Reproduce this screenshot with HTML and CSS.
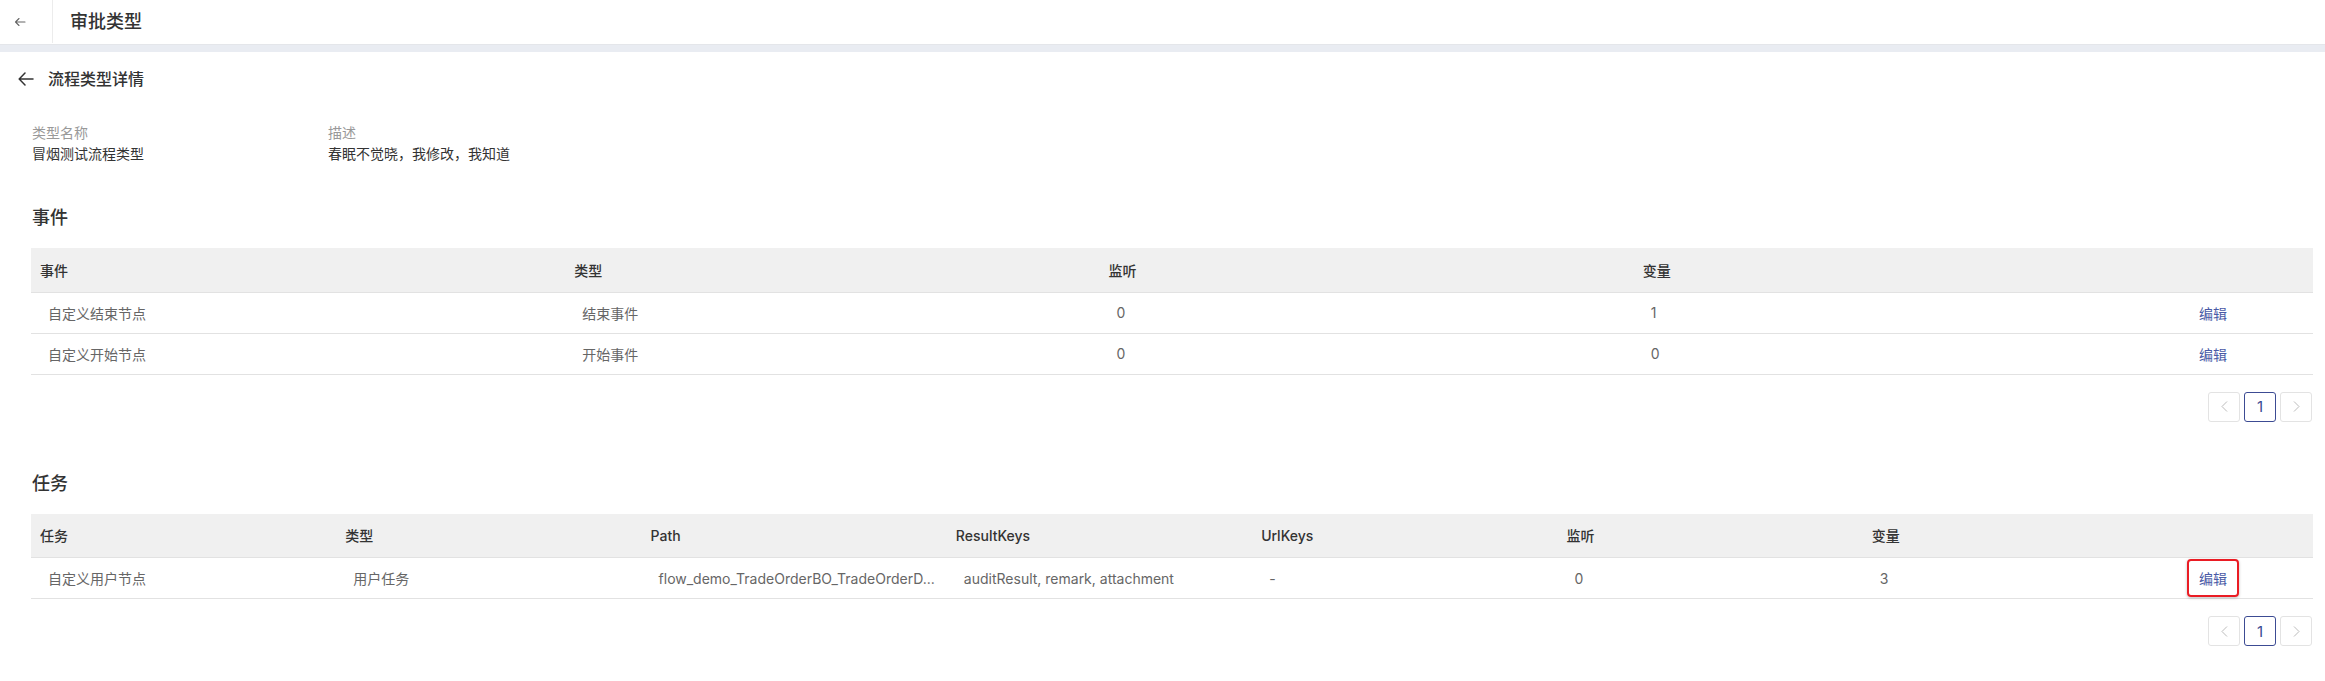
FILE: index.html
```html
<!DOCTYPE html>
<html lang="zh-CN">
<head>
<meta charset="utf-8">
<title>审批类型</title>
<link rel="stylesheet" href="styles.css">
</head>
<body>
  <header class="topbar">
    <a class="topbar-back" href="#" aria-label="返回">
      <svg width="12" height="10" viewBox="0 0 12 10" fill="none" stroke="#666" stroke-width="1.1" stroke-linecap="round" stroke-linejoin="round">
        <path d="M11 5H1.5M5 1.5L1.5 5L5 8.5"/>
      </svg>
    </a>
    <h1 class="topbar-title">审批类型</h1>
  </header>
  <div class="band"></div>

  <div class="page-head">
    <a class="page-back" href="#" aria-label="返回">
      <svg width="16" height="14" viewBox="0 0 16 14" fill="none" stroke="#333" stroke-width="1.5" stroke-linecap="round" stroke-linejoin="round">
        <path d="M15 7H1.5M7 1L1.2 7L7 13"/>
      </svg>
    </a>
    <span class="page-title">流程类型详情</span>
  </div>

  <main class="content">
    <dl class="info">
      <div class="info-item">
        <dt>类型名称</dt>
        <dd>冒烟测试流程类型</dd>
      </div>
      <div class="info-item">
        <dt>描述</dt>
        <dd>春眠不觉晓，我修改，我知道</dd>
      </div>
    </dl>

    <section class="block">
      <h2 class="block-title">事件</h2>
      <table class="grid">
        <colgroup>
          <col><col><col><col><col class="col-action">
        </colgroup>
        <thead>
          <tr><th>事件</th><th>类型</th><th>监听</th><th>变量</th><th></th></tr>
        </thead>
        <tbody>
          <tr>
            <td>自定义结束节点</td><td>结束事件</td><td>0</td><td>1</td>
            <td><button class="link-btn" type="button">编辑</button></td>
          </tr>
          <tr>
            <td>自定义开始节点</td><td>开始事件</td><td>0</td><td>0</td>
            <td><button class="link-btn" type="button">编辑</button></td>
          </tr>
        </tbody>
      </table>
      <nav class="pager">
        <button class="pager-btn" type="button" aria-label="上一页">
          <svg width="7" height="11" viewBox="0 0 7 11" fill="none" stroke="#bbb" stroke-width="1"><path d="M6 0.5L1 5.5L6 10.5"/></svg>
        </button>
        <button class="pager-btn is-current" type="button">1</button>
        <button class="pager-btn" type="button" aria-label="下一页">
          <svg width="7" height="11" viewBox="0 0 7 11" fill="none" stroke="#bbb" stroke-width="1"><path d="M1 0.5L6 5.5L1 10.5"/></svg>
        </button>
      </nav>
    </section>

    <section class="block block-tasks">
      <h2 class="block-title">任务</h2>
      <table class="grid">
        <colgroup>
          <col><col><col><col><col><col><col><col class="col-action">
        </colgroup>
        <thead>
          <tr><th>任务</th><th>类型</th><th>Path</th><th>ResultKeys</th><th>UrlKeys</th><th>监听</th><th>变量</th><th></th></tr>
        </thead>
        <tbody>
          <tr>
            <td>自定义用户节点</td>
            <td>用户任务</td>
            <td class="clip">flow_demo_TradeOrderBO_TradeOrderD...</td>
            <td>auditResult, remark, attachment</td>
            <td>-</td>
            <td>0</td>
            <td>3</td>
            <td><button class="link-btn is-marked" type="button">编辑</button></td>
          </tr>
        </tbody>
      </table>
      <nav class="pager">
        <button class="pager-btn" type="button" aria-label="上一页">
          <svg width="7" height="11" viewBox="0 0 7 11" fill="none" stroke="#bbb" stroke-width="1"><path d="M6 0.5L1 5.5L6 10.5"/></svg>
        </button>
        <button class="pager-btn is-current" type="button">1</button>
        <button class="pager-btn" type="button" aria-label="下一页">
          <svg width="7" height="11" viewBox="0 0 7 11" fill="none" stroke="#bbb" stroke-width="1"><path d="M1 0.5L6 5.5L1 10.5"/></svg>
        </button>
      </nav>
    </section>
  </main>
</body>
</html>
```

FILE: styles.css
```css
* {
  box-sizing: border-box;
}

body {
  margin: 0;
  background: #fff;
  color: #333;
  font-family: "Inter", "Noto Sans CJK SC", sans-serif;
  font-size: 14px;
}

/* top navigation bar */
.topbar {
  display: flex;
  align-items: center;
  height: 45px;
  border-bottom: 1px solid #e4e6ea;
}

.topbar-back {
  display: flex;
  align-items: center;
  justify-content: center;
  width: 53px;
  height: 43px;
  align-self: flex-start;
  border-right: 1px solid #ececec;
  padding-right: 12px;
}

.topbar-title {
  margin: 0 0 0 17px;
  font-size: 18px;
  font-weight: 500;
  line-height: 26px;
  color: #333;
}

.band {
  height: 7px;
  background: #e9ecf2;
}

/* page heading with back arrow */
.page-head {
  display: flex;
  align-items: center;
  height: 54px;
  padding-left: 18px;
}

.page-back {
  display: flex;
  align-items: center;
  width: 30px;
}

.page-title {
  font-size: 16px;
  font-weight: 500;
  line-height: 24px;
  color: #333;
}

.content {
  padding: 0 12px 0 31px;
}

/* basic info */
.info {
  display: grid;
  grid-template-columns: 296px auto;
  margin: 16px 0 0;
  padding-left: 1px;
}

.info dt {
  color: #999;
  line-height: 21px;
}

.info dd {
  margin: 0;
  color: #333;
  line-height: 21px;
}

/* sections */
.block {
  margin-top: 41px;
}

.block-tasks {
  margin-top: 49px;
}

.block-title {
  margin: 0 0 17px 1px;
  font-size: 18px;
  font-weight: 500;
  line-height: 26px;
  color: #333;
}

/* tables */
.grid {
  width: 100%;
  table-layout: fixed;
  border-collapse: collapse;
}

.col-action {
  width: 145px;
}

.grid th {
  height: 44px;
  padding: 0 9px;
  background: #f0f0f0;
  border-bottom: 1px solid #e2e2e2;
  text-align: left;
  font-weight: 500;
  color: #333;
}

.grid td {
  height: 41px;
  padding: 0 9px 0 17px;
  border-bottom: 1px solid #e2e2e2;
  color: #666;
  white-space: nowrap;
}

.grid td.clip {
  overflow: hidden;
  text-overflow: ellipsis;
}

.link-btn {
  margin-left: 2px;
  padding: 0 10px;
  height: 38px;
  border: 2px solid transparent;
  border-radius: 4px;
  background: none;
  font: inherit;
  color: #4a5aa6;
  cursor: pointer;
}

.link-btn.is-marked {
  border-color: #ea1c24;
  box-shadow: 0 1px 3px rgba(0, 0, 0, 0.25);
}

/* pagination */
.pager {
  display: flex;
  justify-content: flex-end;
  gap: 4px;
  margin-top: 17px;
  padding-right: 1px;
}

.pager-btn {
  display: flex;
  align-items: center;
  justify-content: center;
  width: 32px;
  height: 30px;
  padding: 0;
  border: 1px solid #e3e3e3;
  border-radius: 3px;
  background: #fff;
  font-family: "Inter", sans-serif;
  font-size: 15px;
  color: #3c4b93;
}

.pager-btn.is-current {
  border-color: #3c4b93;
}
```
